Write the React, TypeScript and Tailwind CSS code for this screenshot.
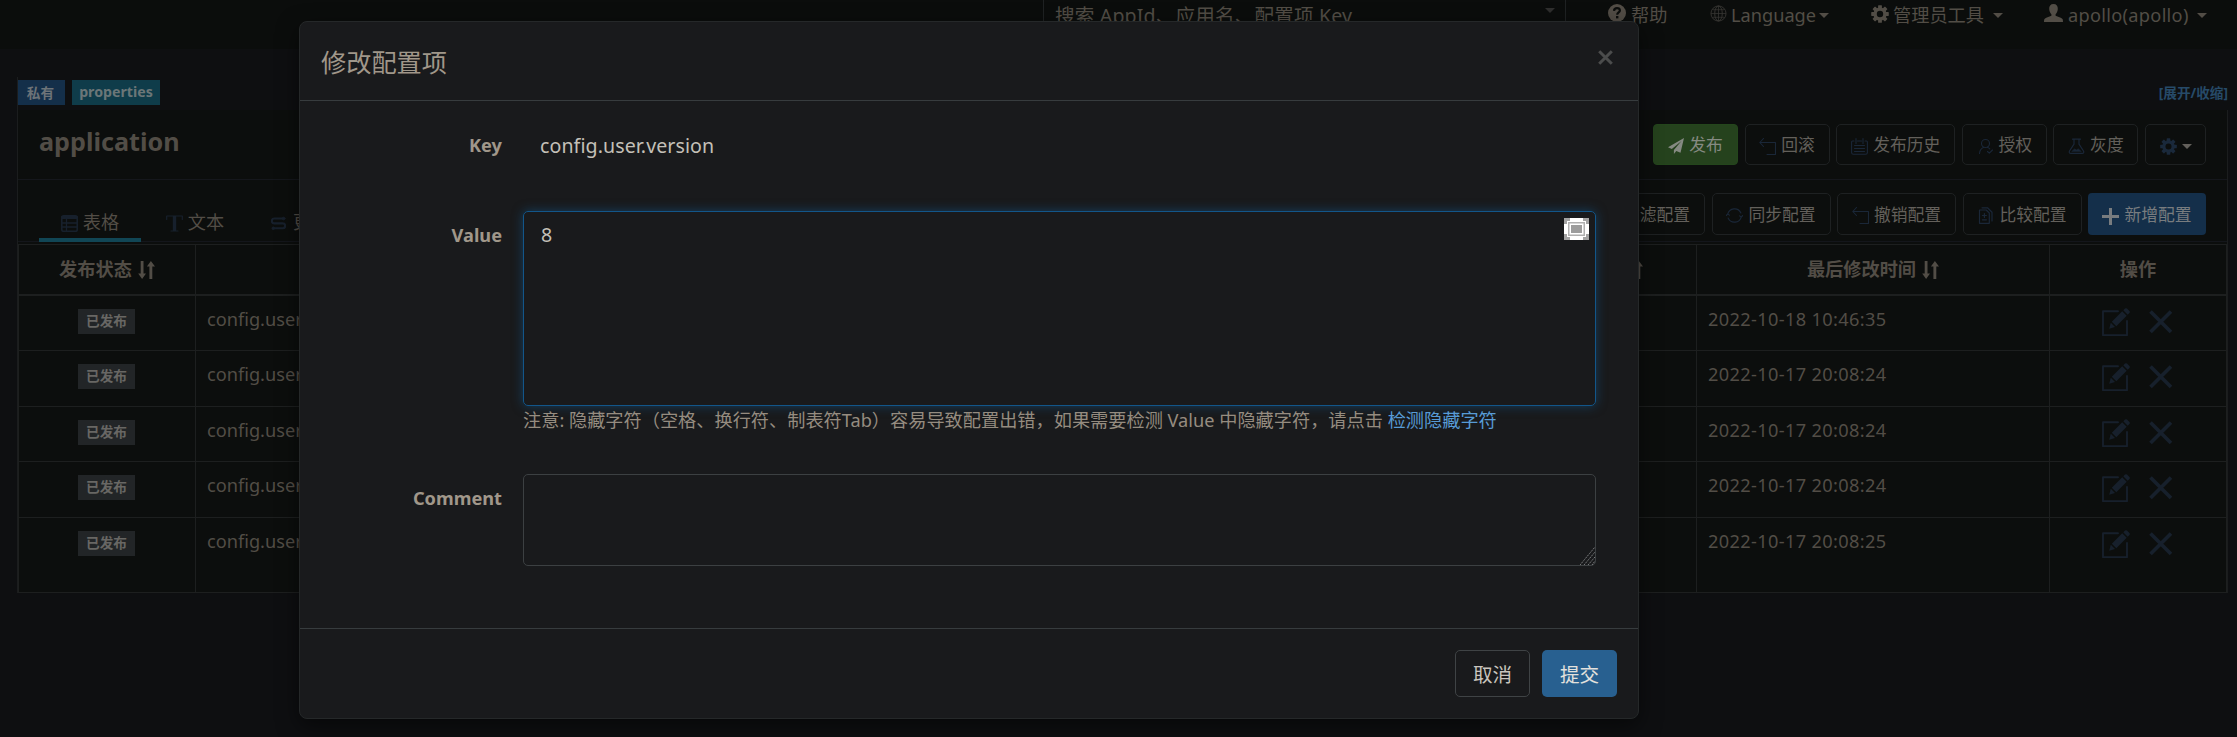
import type { ReactNode } from "react";

function Svg({ className, children, box = 24 }: { className: string; children: ReactNode; box?: number }) {
  return (
    <svg
      viewBox={`0 0 ${box} ${box}`}
      fill="none"
      stroke="currentColor"
      strokeLinecap="round"
      strokeLinejoin="round"
      className={`shrink-0 ${className}`}
    >
      {children}
    </svg>
  );
}

const ICON = "size-[17px] mt-[3px] text-[#1a2738]";

function UndoIcon() {
  return (
    <Svg className={ICON} box={17}>
      <path d="M4.500 .5 .8 4.500l3.700 4M.8 4.500h15.700v12H8" strokeWidth="1.100" />
    </Svg>
  );
}

function CalendarIcon() {
  return (
    <Svg className={ICON} box={17}>
      <path d="M3 3H1.500Q.6 3 .6 4v10.500q0 1.800 1.800 1.800h12.200q1.800 0 1.800-1.800V4q0-1-.9-1H14M6.500 3h4M5 .6v4.800M12 .6v4.800M3.500 7.500h10M3.500 10.500h10M3.500 13.500h10" strokeWidth="1.100" />
    </Svg>
  );
}

function PersonCheckIcon() {
  return (
    <Svg className={ICON} box={17}>
      <circle cx="8.500" cy="5.500" r="4" strokeWidth="1.100" />
      <path d="M2.500 15.500c.3-3.500 2-5.500 4.500-6.300M10.300 9.200c1 .3 1.800.9 2.500 1.700M10.500 13.500l1.800 1.700 3.200-3.200" strokeWidth="1.100" />
    </Svg>
  );
}

function FlaskIcon() {
  return (
    <Svg className={ICON} box={17}>
      <path d="M4.500 1.200h8M6 1.200v5L1.500 13q-.9 2.300 1.300 2.300h11.400q2.200 0 1.300-2.300L11 6.200v-5" strokeWidth="1.200" />
      <path d="M4 13.200 6.500 11l2 .9 1.800-1 2.700 2.300z" fill="currentColor" strokeWidth=".6" />
    </Svg>
  );
}

function RefreshIcon() {
  return (
    <Svg className={ICON} box={17}>
      <path d="M1.700 7.200A7 7 0 0 1 14.900 6M15.300 9.800A7 7 0 0 1 2.100 11M.4 8.500l1.300-1.700 1.700 1.400M16.600 8.500l-1.300 1.700-1.700-1.400" strokeWidth="1.100" />
    </Svg>
  );
}

function CompareIcon() {
  return (
    <Svg className={ICON} box={17}>
      <path d="M2.500 3h6.700L12.300 6v10.300H2.500zM5 .8h5.500L15 5.200V14M7.400 6.500v4M5.400 8.500h4M5.400 12.800h4" strokeWidth="1.200" />
    </Svg>
  );
}

const GEAR_TEETH = [0, 45, 90, 135, 180, 225, 270, 315];

function Gear({ className }: { className: string }) {
  return (
    <svg viewBox="0 0 18 18" className={`shrink-0 ${className}`}>
      <circle cx="9" cy="9" r="4.900" fill="none" stroke="currentColor" strokeWidth="3.400" />
      {GEAR_TEETH.map((angle) => (
        <rect key={angle} x="7.100" y="0.200" width="3.800" height="3.600" rx=".6" fill="currentColor" transform={`rotate(${angle} 9 9)`} />
      ))}
    </svg>
  );
}

function Caret({ className = "" }: { className?: string }) {
  return (
    <svg viewBox="0 0 10 5" className={`h-[5px] w-[10px] shrink-0 ${className}`}>
      <path d="M0 0h10L5 5z" fill="currentColor" />
    </svg>
  );
}

function SortArrows() {
  return (
    <svg viewBox="0 0 17 18" className="h-[18px] w-[17px] shrink-0" fill="currentColor">
      <path d="M2.700 0h2.800v12.500H8L4.100 18 .2 12.500h2.500z" />
      <path d="M11.400 18h2.900V5.500H17L12.900 0 8.900 5.500h2.500z" />
    </svg>
  );
}

function EditIcon() {
  return (
    <svg viewBox="0 0 28 28" className="size-[28px] shrink-0" fill="none" stroke="currentColor">
      <path d="M16 3.200H1V27.200H25V13" strokeWidth="1.900" strokeLinejoin="round" strokeLinecap="round" />
      <path d="m20.200 3.300 4.500 4.500L14.300 18.200l-4.500-4.500z" fill="currentColor" stroke="none" />
      <path d="m8.800 14.700 4.200 4.200L7.200 20.800z" fill="currentColor" stroke="none" />
      <path d="M21.300 2.300 23 .6q1-.9 2 0l2.400 2.400q.9 1 0 2l-1.700 1.700z" fill="currentColor" stroke="none" />
    </svg>
  );
}

function DeleteIcon() {
  return (
    <svg viewBox="0 0 24 24" className="mt-[2px] size-[24px] shrink-0">
      <path d="M1.500 1.500 22 22M22 1.500 1.500 22" stroke="currentColor" strokeWidth="3.700" />
    </svg>
  );
}

function ToolButton({ icon, label, wide = false }: { icon: ReactNode; label: string; wide?: boolean }) {
  return (
    <div
      className={`flex h-full shrink-0 items-center justify-center gap-[5px] rounded-[5px] border border-[#1e2122] text-[16.800px] text-[#63605b] ${
        wide ? "w-[119px]" : "w-[85px]"
      }`}
    >
      {icon}
      <span className="mt-px whitespace-nowrap">{label}</span>
    </div>
  );
}

function NavBar() {
  return (
    <header className="h-[49px] bg-[#0b0d0c] text-[18.200px] leading-[30px] text-[#524d46]">
      <div className="flex h-[30px] items-center whitespace-nowrap pl-[1043px]">
        <div className="flex h-full w-[523px] items-center justify-between border-x border-[#1f2223] pl-[11px] pr-[10px]">
          <span className="mt-px text-[19.600px] tracking-[0.150px]">搜索 AppId、应用名、配置项 Key</span>
          <Caret className="mb-[10px] text-[#2f2f2e]" />
        </div>
        <div className="ml-[42px] flex w-[102px] items-center gap-[5px]">
          <svg viewBox="0 0 18 18" className="mt-[-4px] size-[18px] shrink-0">
            <circle cx="9" cy="9" r="9" fill="currentColor" />
            <path d="M6 6.800Q6.200 4.200 9 4.200t2.900 2.300C11.900 8.400 9.200 8.500 9.200 10.700" fill="none" stroke="#0b0d0c" strokeWidth="2.200" />
            <rect x="8" y="12" width="2.400" height="2.400" fill="#0b0d0c" />
          </svg>
          <span>帮助</span>
        </div>
        <div className="flex w-[161px] items-center">
          <svg viewBox="0 0 18 18" className="mt-[-3px] mr-[4px] size-[17px] shrink-0 text-[#363532]" fill="none" stroke="currentColor">
            <circle cx="9" cy="9" r="8" />
            <ellipse cx="9" cy="9" rx="4" ry="8" />
            <path d="M9 1v16M1 9h16M2.500 5h13M2.500 13h13" strokeWidth=".8" />
          </svg>
          <span className="w-[88px]">Language</span>
          <Caret />
        </div>
        <div className="flex w-[173px] items-center">
          <Gear className="mt-[-3px] mr-[4px] size-[18px]" />
          <span className="w-[100px]">管理员工具</span>
          <Caret />
        </div>
        <div className="flex items-center">
          <svg viewBox="0 0 19 18" className="mt-[-4px] mr-[5px] h-[18px] w-[19px] shrink-0" fill="currentColor">
            <path d="M9.500 0c3 0 4.500 2 4.300 5-.2 2.300-1 4.200-2.200 5.200v1.600c2.400 1.300 5.600 1.900 6.900 3.200.4.600.5 1.700.5 3H0c0-1.300.1-2.400.5-3 1.300-1.300 4.500-1.900 6.900-3.200v-1.600C6.200 9.200 5.400 7.300 5.200 5 5 2 6.500 0 9.500 0z" />
          </svg>
          <span className="w-[129px] tracking-[0.300px]">apollo(apollo)</span>
          <Caret />
        </div>
      </div>
    </header>
  );
}

const ROWS = [
  { time: "2022-10-18 10:46:35", height: "h-[55px]" },
  { time: "2022-10-17 20:08:24", height: "h-[56px]" },
  { time: "2022-10-17 20:08:24", height: "h-[55px]" },
  { time: "2022-10-17 20:08:24", height: "h-[56px]" },
  { time: "2022-10-17 20:08:25", height: "h-[75px]" },
];

function ConfigTable() {
  return (
    <div className="mt-[2px] border-x border-t border-[#1d1f1f] text-[#524d46]">
      <div className="flex h-[51px] border-b-2 border-[#1d1f1f] text-[18.200px] font-bold">
        <div className="flex w-[177px] items-center justify-center gap-[6px] border-r border-[#1d1f1f]">
          <span>发布状态</span>
          <SortArrows />
        </div>
        <div className="w-[1281px]" />
        <div className="flex w-[220px] items-center justify-center gap-[6px] border-r border-[#1d1f1f]">
          <span>最后修改人</span>
          <SortArrows />
        </div>
        <div className="flex w-[353px] items-center justify-center gap-[6px] border-r border-[#1d1f1f]">
          <span>最后修改时间</span>
          <SortArrows />
        </div>
        <div className="flex flex-1 items-center justify-center">操作</div>
      </div>
      {ROWS.map((row, i) => (
        <div key={i} className={`flex border-b border-[#1d1f1f] text-[18.200px] leading-[26px] ${row.height}`}>
          <div className="flex w-[177px] items-start justify-center border-r border-[#1d1f1f] pr-px pt-[13px]">
            <span className="h-[25px] w-[57px] bg-[#222527] text-center text-[13.650px] font-bold leading-[24px] text-[#686764]">已发布</span>
          </div>
          <div className="w-[1501px] border-r border-[#1d1f1f] pl-[11px] pt-[10px]">config.user</div>
          <div className="w-[353px] whitespace-nowrap border-r border-[#1d1f1f] pl-[11px] pt-[10px] tracking-[0.350px]">{row.time}</div>
          <div className="flex flex-1 gap-[19px] pl-[52px] pt-[12px] text-[#17202c]">
            <EditIcon />
            <DeleteIcon />
          </div>
        </div>
      ))}
    </div>
  );
}

function NamespacePanel() {
  return (
    <main className="ml-[17px] mr-[9px] mt-[28px]">
      <div className="flex h-[33px] items-start border-l border-[#1b1d1e] pt-[3px] text-[13.650px] font-bold leading-[25px]">
        <span className="w-[47px] bg-[#142f4a] pr-[2px] text-center leading-[25px] text-[#6d7378]">私有</span>
        <span className="ml-[7px] h-[25px] w-[88px] bg-[#0f3c4a] text-center text-[14.200px] leading-[24px] text-[#6b7678]">properties</span>
        <span className="ml-auto text-[#264a68]">[展开/收缩]</span>
      </div>
      <section className="border-x border-[#1b1d1e] bg-[#0c0e0d]">
        <div className="flex h-[70px] items-start justify-between border-b border-[#15171c] pl-[21px] pr-[21px] pt-[14px]">
          <h2 className="text-[25.200px] font-bold leading-[35px] text-[#524d46]">application</h2>
          <div className="flex h-[41px] gap-[6.600px]">
            <div className="flex w-[85px] items-center justify-center gap-[5px] rounded-[4px] border border-[#24461c] bg-[#25421d] text-[16.800px] text-[#858a82]">
              <svg viewBox="0 0 16 16" className="mt-[3px] size-[16px] shrink-0" fill="currentColor">
                <path d="M16 0 0 9.300l3.800 1.600L13.500 3 5.900 12v4l2.400-3.100 4.200 1.800z" />
              </svg>
              <span className="mt-px">发布</span>
            </div>
            <ToolButton icon={<UndoIcon />} label="回滚" />
            <ToolButton icon={<CalendarIcon />} label="发布历史" wide />
            <ToolButton icon={<PersonCheckIcon />} label="授权" />
            <ToolButton icon={<FlaskIcon />} label="灰度" />
            <div className="flex w-[61px] items-center justify-center gap-[5px] rounded-[5px] border border-[#1e2122] text-[#63605b]">
              <Gear className="mt-[3px] size-[17px] text-[#1a293b]" />
              <Caret className="mt-[3px]" />
            </div>
          </div>
        </div>
        <div className="flex h-[62px] justify-between border-b border-[#14161b] pl-[21px] pr-[21px] text-[#524d46]">
          <div className="flex pt-[26px] text-[18.200px] leading-[33px]">
            <div className="mb-[-1px] flex w-[102px] justify-center gap-[5px] border-b-4 border-[#114655]">
              <Svg className="mt-[9px] size-[17px] text-[#17202c]" box={17}>
                <rect x=".8" y=".8" width="15.400" height="15.400" rx="1.800" strokeWidth="1.600" />
                <path d="M1 2.500h15" strokeWidth="3" />
                <path d="M1 8h15M1 12h15M5.500 4v12" strokeWidth="1.300" />
              </Svg>
              <span>表格</span>
            </div>
            <div className="ml-[3px] flex w-[102px] justify-center gap-[5px]">
              <Svg className="mt-[9px] size-[17px] text-[#17202c]" box={17}>
                <path d="M.7 4.500V1h15.600v3.500M8.500 1v14.500M5 16h7" strokeWidth="1.200" />
                <path d="M8.500 1v15" strokeWidth="3.400" strokeLinecap="butt" />
              </Svg>
              <span>文本</span>
            </div>
            <div className="ml-[25px] flex gap-[7px]">
              <Svg className="mt-[10px] h-[15px] w-[15px] text-[#17202c]" box={16}>
                <path d="M13 2.700H3.500a2.600 2.600 0 0 0 0 5.200h9a2.600 2.600 0 0 1 0 5.200H3" strokeWidth="2.300" />
                <circle cx="13.500" cy="2.700" r="1.400" fill="currentColor" />
                <circle cx="2.500" cy="13.100" r="1.400" fill="currentColor" />
              </Svg>
              <span>更改历史</span>
            </div>
          </div>
          <div className="mt-[13px] flex h-[42px] gap-[6.500px]">
            <ToolButton icon={<CompareIcon />} label="过滤配置" wide />
            <ToolButton icon={<RefreshIcon />} label="同步配置" wide />
            <ToolButton icon={<UndoIcon />} label="撤销配置" wide />
            <ToolButton icon={<CompareIcon />} label="比较配置" wide />
            <div className="flex w-[118px] items-center justify-center gap-[5px] rounded-[4px] bg-[#142f4a] text-[16.800px] text-[#787c7f]">
              <svg viewBox="0 0 17 17" className="mt-[5px] size-[17px] shrink-0">
                <path d="M8.500 0v17M0 8.500h17" stroke="currentColor" strokeWidth="3" />
              </svg>
              <span className="mt-px whitespace-nowrap">新增配置</span>
            </div>
          </div>
        </div>
        <ConfigTable />
      </section>
    </main>
  );
}

function EditDialog() {
  return (
    <div className="absolute left-[299px] top-[21px] flex h-[698px] w-[1340px] flex-col rounded-[8px] border border-[#252829] bg-[#191a1c] shadow-[0_7px_21px_rgba(0,0,0,0.5)]">
      <div className="flex h-[79px] items-start justify-between border-b border-[#373c3e] pl-[21px] pr-[25px]">
        <h1 className="mt-[23px] text-[25.200px] leading-[34px] text-[#a0978a]">修改配置项</h1>
        <svg viewBox="0 0 15 15" className="mt-[28px] size-[15px] text-[#4b4c4c]">
          <path d="M1.200 1.200 13.800 13.800M13.800 1.200 1.200 13.800" stroke="currentColor" strokeWidth="3" />
        </svg>
      </div>
      <div className="h-[527px] pr-[42px] text-[19.600px]">
        <div className="flex h-[110px] pt-[30px] leading-[28px]">
          <div className="w-[202px] text-right text-[18.200px] font-bold text-[#a0978a]">Key</div>
          <div className="pl-[38px] pt-px tracking-[0.080px] text-[#c4c0b8]">config.user.version</div>
        </div>
        <div className="flex h-[263px]">
          <div className="w-[202px] pt-[10px] text-right text-[18.200px] font-bold leading-[28px] text-[#a0978a]">Value</div>
          <div className="ml-[21px] flex-1">
            <div className="flex h-[195px] items-start justify-between rounded-[5px] border border-[#12568a] pl-[17px] pr-[6px] shadow-[0_0_11px_rgba(18,86,138,0.6)]">
              <span className="mt-[9px] leading-[28px] text-[#c4c0b8]">8</span>
              <svg viewBox="0 0 25 22" className="mt-[6px] h-[22px] w-[25px]">
                <path d="M0 0h25v22H0z" fill="#a3a3a3" />
                <path d="M6 0h13v22H6zM0 6h25v10H0zM3 3h19v16H3z" fill="#fff" />
                <path d="M4 4h17v14H4z" fill="#b0b0b0" />
                <path d="M5.500 5.500h14v11h-14z" fill="#fff" />
                <path d="M7 7h11v8H7z" fill="#9c9c9c" />
              </svg>
            </div>
            <p className="mt-px whitespace-nowrap text-[18.200px] leading-[26px] text-[#958c80]">
              注意: 隐藏字符（空格、换行符、制表符Tab）容易导致配置出错，如果需要检测 Value 中隐藏字符，请点击{" "}
              <span className="text-[#579bd6]">检测隐藏字符</span>
            </p>
          </div>
        </div>
        <div className="flex">
          <div className="w-[202px] pt-[10px] text-right text-[18.200px] font-bold leading-[28px] text-[#a0978a]">Comment</div>
          <div className="relative ml-[21px] h-[92px] flex-1 rounded-[5px] border border-[#3c4042]">
            <svg viewBox="0 0 15 18" className="absolute bottom-0 right-0 h-[18px] w-[15px]" stroke="#7d7f80" strokeWidth="1" strokeDasharray="1.500 .8">
              <path d="M0 18 15 0M4 18 15 5M8 18 15 10M12 18l3-4" />
            </svg>
          </div>
        </div>
      </div>
      <div className="flex flex-1 items-start justify-end gap-[12px] border-t border-[#373c3e] pr-[21px] pt-[21px] text-[19.600px]">
        <button className="h-[47px] w-[75px] rounded-[5px] border border-[#3f4345] pt-[2px] text-[#c9c5be]">取消</button>
        <button className="h-[47px] w-[75px] rounded-[5px] bg-[#286090] pt-[2px] text-[#e3e1dd]">提交</button>
      </div>
    </div>
  );
}

export default function App() {
  return (
    <div className="relative h-[737px] w-[2237px] overflow-hidden bg-[#0e0f11] font-['Noto_Sans','Noto_Sans_CJK_SC',sans-serif]">
      <NavBar />
      <NamespacePanel />
      <EditDialog />
    </div>
  );
}
